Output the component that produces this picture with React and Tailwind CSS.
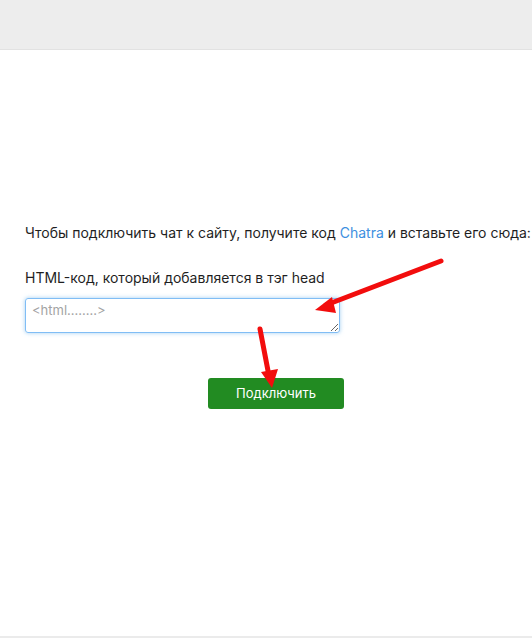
import React from 'react';

const Arrows = () => (
  <svg className="pointer-events-none absolute left-0 top-0" width="532" height="638" viewBox="0 0 532 638">
    {/* arrow to the textarea */}
    <line x1="441" y1="261" x2="326" y2="305" stroke="#f20d0d" strokeWidth="5" strokeLinecap="round" />
    <polygon points="315,310 332,297 336,313" fill="#f20d0d" />
    {/* arrow to the button */}
    <line x1="260" y1="329" x2="269" y2="376" stroke="#f20d0d" strokeWidth="5" strokeLinecap="round" />
    <polygon points="272,388 261,372 278,369" fill="#f20d0d" />
  </svg>
);

export default function App() {
  return (
    <div className="relative flex h-[638px] w-full flex-col bg-white font-['Inter','Noto_Sans',sans-serif] text-[14px] text-[#1f1f1f]">
      {/* Top bar */}
      <div className="h-[50px] w-full border-b border-[#e2e2e2] bg-[#ededed]" />

      {/* Content */}
      <div className="flex flex-1 flex-col border-b-2 border-[#ebebeb] px-[25px] pt-[173px]">
        <div className="w-[502px]">
          <p className="whitespace-nowrap leading-[20px]">
            Чтобы подключить чат к сайту, получите код{' '}
            <a href="#" className="text-[#3d8fe0]">Chatra</a> и вставьте его сюда:
          </p>

          <p className="mt-[25px] leading-[20px]">HTML-код, который добавляется в тэг head</p>

          <textarea
            placeholder="<html........>"
            className="mt-[10px] block h-[35px] w-[315px] rounded-[3px] border border-[#80bdf5] px-[6px] pt-[1px] text-[13px] leading-[20px] shadow-[0_0_4px_rgba(102,175,233,0.6)] outline-none placeholder:text-[#a3a3a3]"
          />

          <div className="mt-[45px] flex justify-center">
            <button className="h-[31px] w-[136px] rounded-[3px] bg-[#228b22] text-[13px] text-white">
              Подключить
            </button>
          </div>
        </div>
      </div>

      <Arrows />
    </div>
  );
}
